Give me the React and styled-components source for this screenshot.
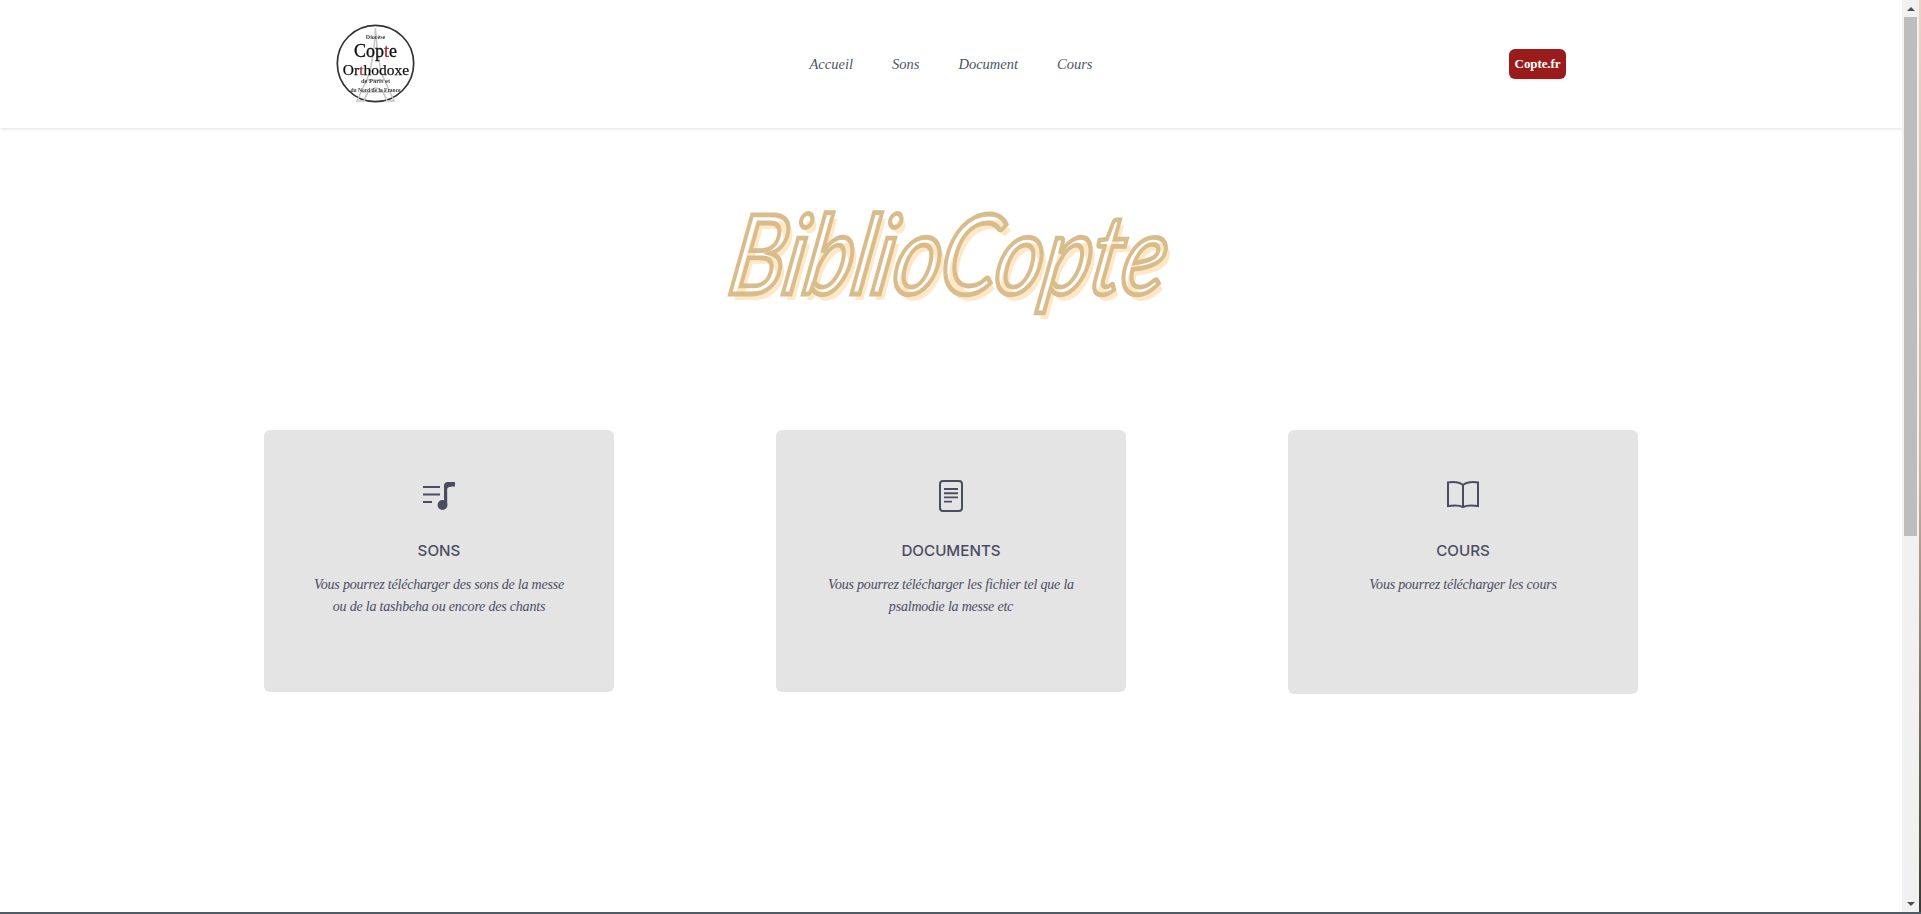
import React from "react";
import styled, { createGlobalStyle } from "styled-components";

const Global = createGlobalStyle`
  html, body { margin: 0; padding: 0; height: 914px; overflow: hidden; background: #fff; }
  * { box-sizing: border-box; }
`;
const script = `"Liberation Serif", "DejaVu Serif", serif`;

const Screen = styled.div`display: flex; flex-direction: column; width: 1921px; height: 914px;`;
const Row = styled.div`display: flex; flex: 1; min-height: 0;`;
const BottomStrip = styled.div`height: 2px; background: #4d5c66; flex: none;`;
const Page = styled.div`flex: 1; min-width: 0; background: #fff;`;
const Scrollbar = styled.div`
  width: 17px; flex: none; background: #f1f1f1; display: flex; flex-direction: column;
  align-items: center; justify-content: space-between; padding: 0 2px;
`;
const Arrow = styled.div`
  flex: none; height: 17px; width: 100%; display: flex; align-items: center; justify-content: center;
  &::before {
    content: ""; width: 0; height: 0; border-left: 4px solid transparent; border-right: 4px solid transparent;
    ${p => p.$down ? "border-top: 4px solid #505050;" : "border-bottom: 4px solid #505050;"}
  }
`;
const Thumb = styled.div`width: 13px; height: 519px; background: #bdbdbd; flex: none;`;
const Track = styled.div`flex: 1; width: 100%; display: flex; justify-content: center;`;
const DesktopEdge = styled.div`width: 2px; flex: none; background: linear-gradient(#e8d5c4, #c9b7a5 50%, #3a3a30);`;

const Header = styled.header`
  height: 128px; background: #fff; box-shadow: 0 1px 3px rgba(0,0,0,.12);
  display: grid; grid-template-columns: 1fr auto 1fr; align-items: center; padding: 0 336px;
`;
const LogoBox = styled.div`justify-self: start; width: 80px; height: 80px;`;
const Nav = styled.nav`display: flex; gap: 39px; margin-top: 1px;`;
const NavLink = styled.a`
  font-family: ${script}; font-style: italic; font-size: 14.5px; color: #4b5563; text-decoration: none;
`;
const CopteButton = styled.a`
  justify-self: end; width: 57px; height: 30px; background: #991b1b; border-radius: 6px;
  display: flex; align-items: center; justify-content: center;
  color: #fff; font-family: ${script}; font-weight: 700; font-size: 13px; letter-spacing: -.1px;
  box-shadow: 0 1px 2px rgba(0,0,0,.1);
`;

const TitleBlock = styled.section`height: 302px; display: flex; align-items: center; justify-content: center; padding-bottom: 55px;`;
const Title = styled.h1`
  margin: 0; font-family: Lato, "Open Sans", sans-serif; font-style: italic; font-weight: 400; font-size: 92px; letter-spacing: -.5px;
  color: transparent; -webkit-text-stroke: 4px #d9bc8b; text-shadow: 5px 5px 0 #ffe8c6; line-height: 120px;
  transform: skewX(-10deg) scaleY(1.2);
`;

const Cards = styled.section`display: grid; grid-template-columns: repeat(3, 350px); column-gap: 162px; justify-content: start; align-items: start; padding-left: 264px;`;
const Card = styled.article`
  background: #e4e4e4; border-radius: 6px; height: ${p => p.$h}px; color: #4a4d62;
  display: flex; flex-direction: column; align-items: center; padding-top: 50px; text-align: center;
`;
const IconSlot = styled.div`height: 34px; display: flex; align-items: flex-start; justify-content: center; color: #4a4d62;`;
const CardTitle = styled.h2`
  margin: 25px 0 0; font-family: Inter, "Open Sans", sans-serif; font-weight: 500; font-size: 15.2px; line-height: 24px; color: #4a4d62;
`;
const CardText = styled.p`
  margin: 11px 0 0; font-family: ${script}; font-style: italic; font-size: 14px; letter-spacing: -.2px; line-height: 22px; color: #4a4d62;
`;

const serif = "Liberation Serif, serif";
const Logo = () => (
  <svg width="80" height="80" viewBox="0 0 80 80" role="img" aria-label="Logo" style={{ filter: "blur(.4px)" }}>
    <circle cx="39.5" cy="39.5" r="38.2" fill="#fff" stroke="#333" strokeWidth="1.7" />
    <path d="M39.5 4 L41 24 L45 48 L58 77 H51 C48 68 44 64 39.5 64 C35 64 31 68 28 77 H21 L34 48 L38 24 Z M31 56 H48 M26 68 H53" fill="none" stroke="#c4c4c4" strokeWidth="1.5" />
    <text x="39.5" y="14.5" textAnchor="middle" fontFamily={serif} fontSize="6" fontWeight="700" fill="#444">Diocèse</text>
    <text x="39.5" y="33" textAnchor="middle" fontFamily={serif} fontSize="18" fill="#111" stroke="#111" strokeWidth=".3">Cop<tspan fill="#b02028" stroke="#b02028">t</tspan>e</text>
    <text x="40" y="50.5" textAnchor="middle" fontFamily={serif} fontSize="15.5" fill="#111" stroke="#111" strokeWidth=".25">Or<tspan fill="#b02028" stroke="#b02028">t</tspan>hodoxe</text>
    <text x="39.5" y="59" textAnchor="middle" fontFamily={serif} fontSize="6.5" fontWeight="700" fill="#444">de Paris et</text>
    <text x="39.5" y="67.5" textAnchor="middle" fontFamily={serif} fontSize="5.5" fontWeight="700" fill="#444">du Nord de la France</text>
  </svg>
);

const MusicIcon = () => (
  <svg width="32" height="30" viewBox="0 -2 32 30" fill="none">
    <path d="M0 5H17M0 12.5H17M0 20H9" stroke="currentColor" strokeWidth="2" />
    <path d="M21 22V3.5C21 1.2 22.6 0 25 0H32V4.5C28 4.5 24.2 4.6 24.2 7.5V23Z" fill="currentColor" />
    <circle cx="19.5" cy="23" r="4.9" fill="currentColor" />
  </svg>
);
const DocIcon = () => (
  <svg width="24" height="32" viewBox="0 0 24 32" fill="none" stroke="currentColor">
    <rect x="1" y="1" width="22" height="30" rx="3" strokeWidth="2" />
    <path d="M5 9H19M5 13.2H19M5 17.4H19M5 21.6H13" strokeWidth="1.9" />
  </svg>
);
const BookIcon = () => (
  <svg width="32" height="28" viewBox="0 -1 32 28" fill="none" stroke="currentColor" strokeWidth="2">
    <path d="M16 4C13 1.6 8 .6 1 1.4V25C8 24 13 24.4 16 26C19 24.4 24 24 31 25V1.4C24 .6 19 1.6 16 4ZM16 4V26" />
  </svg>
);

const items = [
  { h: 262, title: "SONS", icon: <MusicIcon />, lines: ["Vous pourrez télécharger des sons de la messe", "ou de la tashbeha ou encore des chants"] },
  { h: 262, title: "DOCUMENTS", icon: <DocIcon />, lines: ["Vous pourrez télécharger les fichier tel que la", "psalmodie la messe etc"] },
  { h: 264, title: "COURS", icon: <BookIcon />, lines: ["Vous pourrez télécharger les cours"] },
];

export default function App() {
  return (
    <Screen>
      <Global />
      <Row>
        <Page>
          <Header>
            <LogoBox><Logo /></LogoBox>
            <Nav>
              {["Accueil", "Sons", "Document", "Cours"].map(n => <NavLink key={n}>{n}</NavLink>)}
            </Nav>
            <CopteButton>Copte.fr</CopteButton>
          </Header>
          <TitleBlock><Title>BiblioCopte</Title></TitleBlock>
          <Cards>
            {items.map(it => (
              <Card key={it.title} $h={it.h}>
                <IconSlot>{it.icon}</IconSlot>
                <CardTitle>{it.title}</CardTitle>
                <CardText>{it.lines.map((l, i) => <React.Fragment key={i}>{i > 0 && <br />}{l}</React.Fragment>)}</CardText>
              </Card>
            ))}
          </Cards>
        </Page>
        <Scrollbar>
          <Arrow />
          <Track><Thumb /></Track>
          <Arrow $down />
        </Scrollbar>
        <DesktopEdge />
      </Row>
      <BottomStrip />
    </Screen>
  );
}
